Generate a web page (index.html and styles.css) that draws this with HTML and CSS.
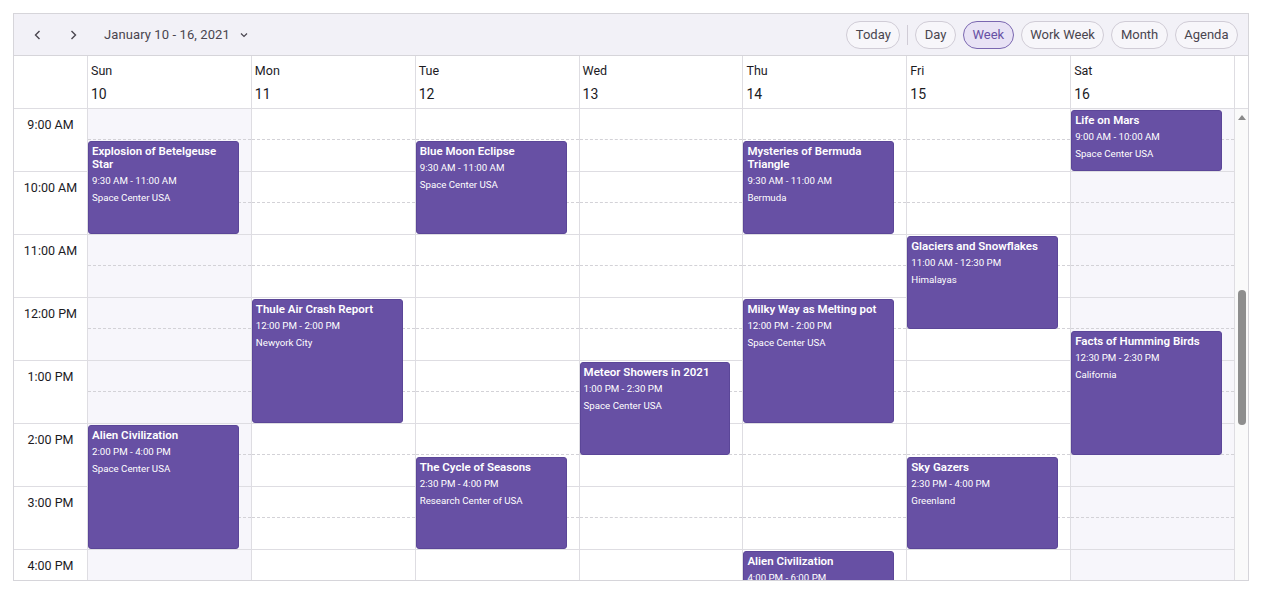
FILE: index.html
```html
<!DOCTYPE html>
<html>
<head>
<meta charset="utf-8">
<link rel="stylesheet" href="styles.css">
</head>
<body>
<div class="scheduler">
  <div class="toolbar">
    <div class="tb-left">
      <button class="icon-btn" aria-label="Previous">
        <svg width="12" height="12" viewBox="0 0 12 12"><path d="M7.5 2 L3.5 6 L7.5 10" fill="none" stroke="#49454f" stroke-width="1.4"/></svg>
      </button>
      <button class="icon-btn" aria-label="Next">
        <svg width="12" height="12" viewBox="0 0 12 12"><path d="M4.5 2 L8.5 6 L4.5 10" fill="none" stroke="#49454f" stroke-width="1.4"/></svg>
      </button>
      <div class="date-range">January 10 - 16, 2021
        <svg class="caret" width="10" height="10" viewBox="0 0 10 10"><path d="M2 3.5 L5 6.5 L8 3.5" fill="none" stroke="#49454f" stroke-width="1.2"/></svg>
      </div>
    </div>
    <div class="tb-right">
      <button class="pill">Today</button>
      <span class="sep"></span>
      <button class="pill">Day</button>
      <button class="pill active">Week</button>
      <button class="pill">Work Week</button>
      <button class="pill">Month</button>
      <button class="pill">Agenda</button>
    </div>
  </div>

  <div class="header">
    <div class="hcell corner"></div>
    <div class="hcell"><div class="dname">Sun</div><div class="dnum">10</div></div>
    <div class="hcell"><div class="dname">Mon</div><div class="dnum">11</div></div>
    <div class="hcell"><div class="dname">Tue</div><div class="dnum">12</div></div>
    <div class="hcell"><div class="dname">Wed</div><div class="dnum">13</div></div>
    <div class="hcell"><div class="dname">Thu</div><div class="dnum">14</div></div>
    <div class="hcell"><div class="dname">Fri</div><div class="dnum">15</div></div>
    <div class="hcell last"><div class="dname">Sat</div><div class="dnum">16</div></div>
    <div class="hcell blank"></div>
  </div>

  <div class="body">
    <div class="timecol">
      <div class="tcell"><span>9:00 AM</span></div>
      <div class="tcell"><span>10:00 AM</span></div>
      <div class="tcell"><span>11:00 AM</span></div>
      <div class="tcell"><span>12:00 PM</span></div>
      <div class="tcell"><span>1:00 PM</span></div>
      <div class="tcell"><span>2:00 PM</span></div>
      <div class="tcell"><span>3:00 PM</span></div>
      <div class="tcell"><span>4:00 PM</span></div>
    </div>

    <div class="day weekend">
      <div class="hr"><div class="half"></div></div><div class="hr"><div class="half"></div></div><div class="hr"><div class="half"></div></div><div class="hr"><div class="half"></div></div><div class="hr"><div class="half"></div></div><div class="hr"><div class="half"></div></div><div class="hr"><div class="half"></div></div><div class="hr"><div class="half"></div></div>
      <div class="event" style="top:32px;height:93px"><div class="ttl">Explosion of Betelgeuse Star</div><div class="tm">9:30 AM - 11:00 AM</div><div class="loc">Space Center USA</div></div>
      <div class="event" style="top:316px;height:124px"><div class="ttl">Alien Civilization</div><div class="tm">2:00 PM - 4:00 PM</div><div class="loc">Space Center USA</div></div>
    </div>

    <div class="day">
      <div class="hr"><div class="half"></div></div><div class="hr"><div class="half"></div></div><div class="hr"><div class="half"></div></div><div class="hr"><div class="half"></div></div><div class="hr"><div class="half"></div></div><div class="hr"><div class="half"></div></div><div class="hr"><div class="half"></div></div><div class="hr"><div class="half"></div></div>
      <div class="event" style="top:190px;height:124px"><div class="ttl">Thule Air Crash Report</div><div class="tm">12:00 PM - 2:00 PM</div><div class="loc">Newyork City</div></div>
    </div>

    <div class="day">
      <div class="hr"><div class="half"></div></div><div class="hr"><div class="half"></div></div><div class="hr"><div class="half"></div></div><div class="hr"><div class="half"></div></div><div class="hr"><div class="half"></div></div><div class="hr"><div class="half"></div></div><div class="hr"><div class="half"></div></div><div class="hr"><div class="half"></div></div>
      <div class="event" style="top:32px;height:93px"><div class="ttl">Blue Moon Eclipse</div><div class="tm">9:30 AM - 11:00 AM</div><div class="loc">Space Center USA</div></div>
      <div class="event" style="top:348px;height:92px"><div class="ttl">The Cycle of Seasons</div><div class="tm">2:30 PM - 4:00 PM</div><div class="loc">Research Center of USA</div></div>
    </div>

    <div class="day">
      <div class="hr"><div class="half"></div></div><div class="hr"><div class="half"></div></div><div class="hr"><div class="half"></div></div><div class="hr"><div class="half"></div></div><div class="hr"><div class="half"></div></div><div class="hr"><div class="half"></div></div><div class="hr"><div class="half"></div></div><div class="hr"><div class="half"></div></div>
      <div class="event" style="top:253px;height:93px"><div class="ttl">Meteor Showers in 2021</div><div class="tm">1:00 PM - 2:30 PM</div><div class="loc">Space Center USA</div></div>
    </div>

    <div class="day">
      <div class="hr"><div class="half"></div></div><div class="hr"><div class="half"></div></div><div class="hr"><div class="half"></div></div><div class="hr"><div class="half"></div></div><div class="hr"><div class="half"></div></div><div class="hr"><div class="half"></div></div><div class="hr"><div class="half"></div></div><div class="hr"><div class="half"></div></div>
      <div class="event" style="top:32px;height:93px"><div class="ttl">Mysteries of Bermuda Triangle</div><div class="tm">9:30 AM - 11:00 AM</div><div class="loc">Bermuda</div></div>
      <div class="event" style="top:190px;height:124px"><div class="ttl">Milky Way as Melting pot</div><div class="tm">12:00 PM - 2:00 PM</div><div class="loc">Space Center USA</div></div>
      <div class="event" style="top:442px;height:124px"><div class="ttl">Alien Civilization</div><div class="tm">4:00 PM - 6:00 PM</div><div class="loc">Space Center USA</div></div>
    </div>

    <div class="day">
      <div class="hr"><div class="half"></div></div><div class="hr"><div class="half"></div></div><div class="hr"><div class="half"></div></div><div class="hr"><div class="half"></div></div><div class="hr"><div class="half"></div></div><div class="hr"><div class="half"></div></div><div class="hr"><div class="half"></div></div><div class="hr"><div class="half"></div></div>
      <div class="event" style="top:127px;height:93px"><div class="ttl">Glaciers and Snowflakes</div><div class="tm">11:00 AM - 12:30 PM</div><div class="loc">Himalayas</div></div>
      <div class="event" style="top:348px;height:92px"><div class="ttl">Sky Gazers</div><div class="tm">2:30 PM - 4:00 PM</div><div class="loc">Greenland</div></div>
    </div>

    <div class="day weekend">
      <div class="hr"><div class="half"></div></div><div class="hr"><div class="half"></div></div><div class="hr"><div class="half"></div></div><div class="hr"><div class="half"></div></div><div class="hr"><div class="half"></div></div><div class="hr"><div class="half"></div></div><div class="hr"><div class="half"></div></div><div class="hr"><div class="half"></div></div>
      <div class="event" style="top:1px;height:61px"><div class="ttl">Life on Mars</div><div class="tm">9:00 AM - 10:00 AM</div><div class="loc">Space Center USA</div></div>
      <div class="event" style="top:222px;height:124px"><div class="ttl">Facts of Humming Birds</div><div class="tm">12:30 PM - 2:30 PM</div><div class="loc">California</div></div>
    </div>

    <div class="scrollbar">
      <span class="arrow up"></span>
      <div class="track"><div class="thumb"></div></div>
      <span class="arrow down"></span>
    </div>
  </div>
</div>
</body>
</html>
```

FILE: styles.css
```css
* { box-sizing: border-box; }
html, body { margin: 0; padding: 0; background: #ffffff; }
body {
  font-family: Roboto, "Noto Sans", "Liberation Sans", sans-serif;
  color: #1c1b1f;
  padding: 13px 13px 0 13px;
}
.scheduler {
  border: 1px solid #d6d5da;
  width: 1236px;
  background: #fff;
}
.toolbar {
  height: 42px;
  background: #f2f1f7;
  border-bottom: 1px solid #d6d5da;
  display: flex;
  align-items: center;
  justify-content: space-between;
  padding: 0 10px 0 10px;
}
.tb-left { display: flex; align-items: center; }
.icon-btn {
  width: 28px; height: 28px;
  border: none; background: transparent;
  display: flex; align-items: center; justify-content: center;
  padding: 0; margin-right: 7px;
}
.date-range {
  margin-left: 10px;
  font-size: 13px;
  color: #49454f;
  display: flex; align-items: center;
  letter-spacing: 0.1px;
}
.caret { margin-left: 9px; }
.tb-right { display: flex; align-items: center; gap: 7px; }
.pill {
  height: 28px;
  border: 1px solid #d0ccd6;
  border-radius: 14px;
  background: #f7f6fa;
  font-family: Roboto, "Noto Sans", "Liberation Sans", sans-serif;
  font-size: 13px;
  color: #49454f;
  padding: 0 8.5px;
  line-height: 26px;
}
.pill.active {
  background: #e8e2f5;
  border-color: #7a67b0;
  color: #6750a4;
}
.sep {
  width: 1px; height: 20px;
  background: #d0ccd6;
  margin: 0;
}
.header {
  display: grid;
  grid-template-columns: 74px repeat(7, 1fr) 13px;
  height: 53px;
  border-bottom: 1px solid #dedde2;
}
.hcell {
  border-right: 1px solid #dedde2;
  padding: 7px 0 0 3px;
}
.hcell.blank { border-right: none; }
.dname { font-size: 12.5px; line-height: 16px; color: #1c1b1f; }
.dnum { font-size: 14px; line-height: 20px; margin-top: 5px; color: #1c1b1f; }
.body {
  display: grid;
  grid-template-columns: 74px repeat(7, 1fr) 13px;
  height: 471px;
  overflow: hidden;
}
.timecol { border-right: 1px solid #dedde2; }
.tcell {
  height: 63px;
  border-bottom: 1px solid #dedde2;
  font-size: 12.5px;
  text-align: center;
}
.tcell span { display: block; line-height: 31px; }
.day {
  position: relative;
  border-right: 1px solid #dedde2;
}
.day.weekend { background: #f7f6fb; }
.hr {
  height: 63px;
  border-bottom: 1px solid #dedde2;
}
.half {
  height: 31px;
  border-bottom: 1px dashed #d3d2d7;
}
.event {
  position: absolute;
  left: 0;
  right: 12px;
  background: #6750a4;
  border: 1px solid #5b4698;
  border-radius: 3px;
  color: #ffffff;
  padding: 3px 3px 0 3px;
  overflow: hidden;
}
.ttl {
  font-size: 11.5px;
  font-weight: 600;
  line-height: 13px;
}
.tm {
  font-size: 9.7px;
  line-height: 14px;
  margin-top: 3px;
}
.loc {
  font-size: 9.7px;
  line-height: 14px;
  margin-top: 3px;
}
.scrollbar {
  background: #fafafa;
  display: flex;
  flex-direction: column;
  align-items: center;
}
.arrow {
  width: 0; height: 0;
  border-left: 4px solid transparent;
  border-right: 4px solid transparent;
}
.arrow.up { border-bottom: 5px solid #8a8a8a; margin-top: 6px; }
.arrow.down { border-top: 5px solid #8a8a8a; margin-bottom: 6px; }
.track { flex: 1; width: 100%; display: flex; justify-content: center; }
.thumb {
  width: 8px;
  height: 135px;
  margin-top: 170px;
  border-radius: 4px;
  background: #8e8e8e;
}
```
